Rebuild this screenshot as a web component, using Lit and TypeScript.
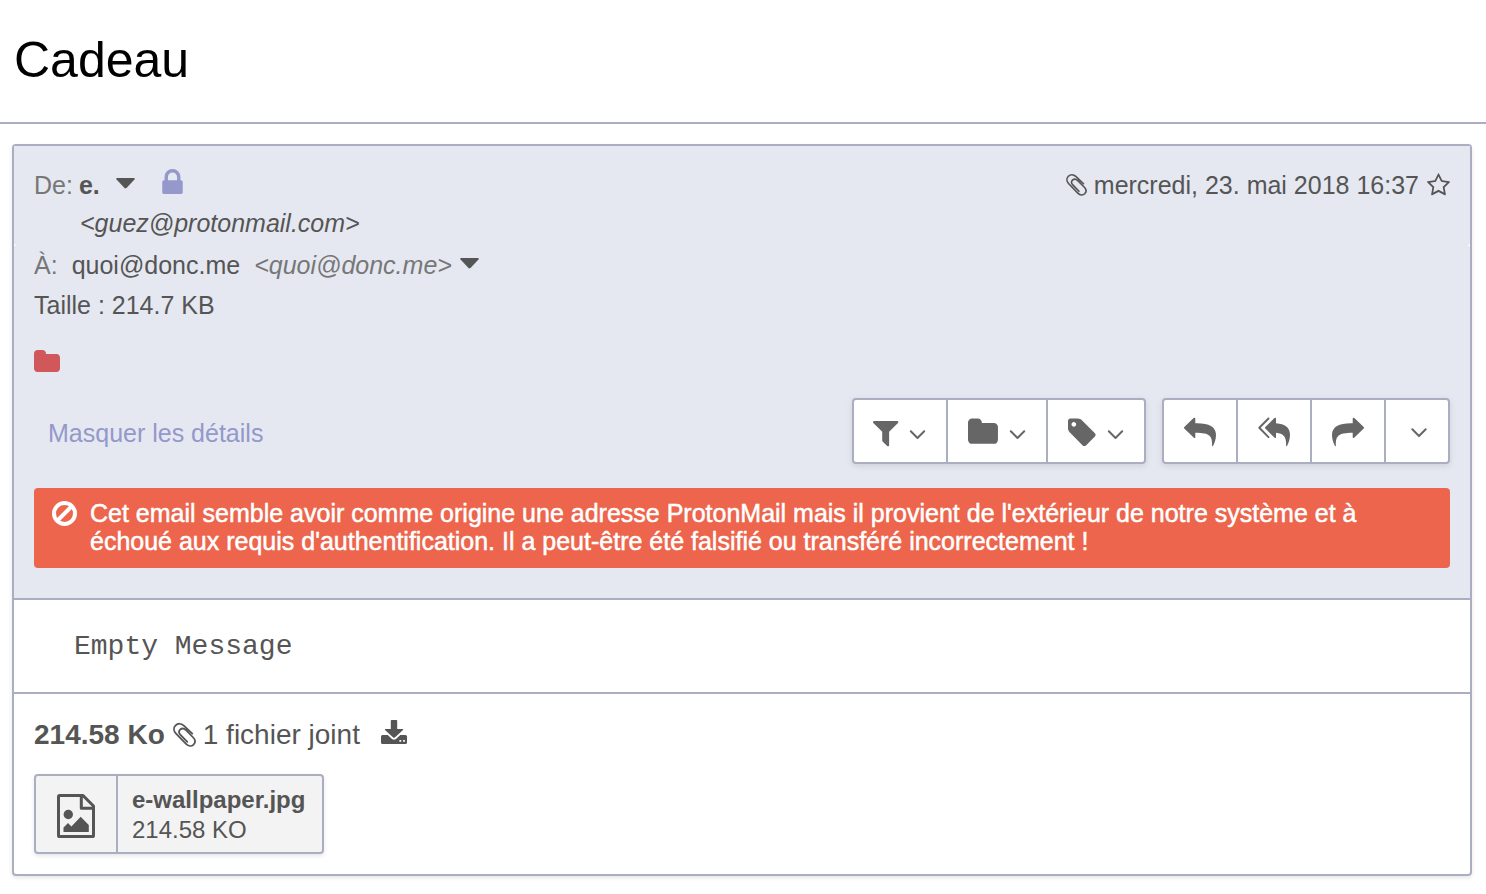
import { LitElement, html, css, svg } from "lit";
import { customElement, property } from "lit/decorators.js";

const CLIP =
  "M19.300 10.600 10.800 2.600C8.200.200 4.800.200 2.600 2.400.400 4.600.500 7.900 2.800 10.300L13 20.900C15.400 23.400 18.600 23.500 20.600 21.600 22.600 19.600 22.400 16.800 20.200 14.500L13 7.200C11.100 5.300 8.600 5.200 7.100 6.600 5.600 8.100 5.800 10.100 7.500 11.900L14.300 18.900";
const FOLDER =
  "M1728 608v704q0 92-66 158t-158 66h-1216q-92 0-158-66t-66-158v-960q0-92 66-158t158-66h320q92 0 158 66t66 158v32h672q92 0 158 66t66 158z";
const LOCK =
  "M640 768h512v-192q0-106-75-181t-181-75-181 75-75 181v192zm832 96v576q0 40-28 68t-68 28h-960q-40 0-68-28t-28-68v-576q0-40 28-68t68-28h32v-192q0-184 132-316t316-132 316 132 132 316v192h32q40 0 68 28t28 68z";
const STAR =
  "M1201 1004l306-297-422-62-189-382-189 382-422 62 306 297-73 421 378-199 377 199zm527-357q0 22-26 48l-363 354 86 500q1 7 1 20 0 50-41 50-19 0-40-12l-449-236-449 236q-22 12-40 12-21 0-31.5-14.5t-10.5-35.5q0-6 2-20l86-500-364-354q-25-27-25-48 0-37 56-46l502-73 225-455q19-41 49-41t49 41l225 455 502 73q56 9 56 46z";
const FILTER =
  "M1595 295q17 41-14 70l-493 493v742q0 42-39 59-13 5-25 5-27 0-45-19l-256-256q-19-19-19-45v-486l-493-493q-31-29-14-70 17-39 59-39h1280q42 0 59 39z";
const TAG =
  "M576 448q0-53-37.5-90.5t-90.5-37.5-90.5 37.5-37.5 90.5 37.5 90.5 90.5 37.5 90.5-37.5 37.5-90.5zm1067 576q0 53-37 90l-491 492q-39 37-91 37-53 0-90-37l-715-716q-38-37-64.5-101t-26.5-117v-416q0-52 38-90t90-38h416q53 0 117 26.5t102 64.5l715 714q37 39 37 91z";
const REPLY =
  "M.3 9.6 9.6.6Q11.3-.6 11.3 1.4V5.7C24 5.3 32 8.6 32 17.4c0 4.4-1.6 8.4-3 11q-.8.8-.9-.4C28.3 18.400 26 15.300 11.300 15.200V19.400Q11.300 21.400 9.600 20.100L.3 11.100Q-.4 10.300.3 9.600z";

type IconDef = { w: number; h: number; box: string; art: unknown };

const clipArt = svg`<path fill="none" stroke="currentColor" stroke-width="1.800" stroke-linecap="round" d=${CLIP} />`;

const ICONS: Record<string, IconDef> = {
  clip: { w: 20, h: 22, box: "0 0 22 24", art: clipArt },
  clipLarge: { w: 22, h: 24, box: "0 0 22 24", art: clipArt },
  label: { w: 26, h: 22, box: "64 128 1664 1408", art: svg`<path d=${FOLDER} />` },
  lock: { w: 21, h: 25, box: "320 128 1152 1408", art: svg`<path d=${LOCK} />` },
  star: { w: 23, h: 22, box: "64 128 1664 1491", art: svg`<path d=${STAR} />` },
  caret: {
    w: 19,
    h: 11,
    box: "0 0 19 11",
    art: svg`<path d="M1.200 0h16.600q1.700.2.700 1.500l-8 8.600q-1 .9-2 0l-8-8.600Q-.5.2 1.200 0z" />`,
  },
  filter: {
    w: 24,
    h: 30,
    box: "0 0 24 30",
    art: svg`<path transform="translate(-1 5) scale(.018) translate(-192 -256)" d=${FILTER} />`,
  },
  folder: {
    w: 30,
    h: 30,
    box: "0 0 30 30",
    art: svg`<path transform="translate(0 2.500) scale(.018) translate(-64 -128)" d=${FOLDER} />`,
  },
  tag: {
    w: 28,
    h: 30,
    box: "0 0 28 30",
    art: svg`<path transform="translate(0 2.500) scale(.0182) translate(-128 -128)" d=${TAG} />`,
  },
  chevronLow: {
    w: 16,
    h: 30,
    box: "0 0 16 30",
    art: svg`<path class="line" d="M.8 15.300 7.500 22l6.700-6.700" />`,
  },
  chevron: {
    w: 16,
    h: 30,
    box: "0 0 16 30",
    art: svg`<path class="line" d="M1.300 13.300 8 20l6.700-6.700" />`,
  },
  reply: {
    w: 32,
    h: 30,
    box: "0 0 32 30",
    art: svg`<path transform="translate(0 1.500)" d=${REPLY} />`,
  },
  replyAll: {
    w: 32,
    h: 30,
    box: "0 0 32 30",
    art: svg`<g transform="translate(0 1.500)">
      <path class="line" d="M10.500 1 1.300 10.300l9.200 9.300" />
      <path d="M7.300 9.600 16.400.6Q18-.6 18 1.400V5.700C27 6.500 32 9.500 32 17.400c0 4.400-1.600 8.400-3 11q-.8.8-.9-.4C28.300 19.500 26 16 18 15.200V19.400Q18 21.400 16.400 20.100L7.300 11.100Q6.600 10.300 7.300 9.600z" />
    </g>`,
  },
  forward: {
    w: 32,
    h: 30,
    box: "0 0 32 30",
    art: svg`<path transform="translate(32 1.500) scale(-1 1)" d=${REPLY} />`,
  },
  ban: {
    w: 25,
    h: 25,
    box: "0 0 25 25",
    art: svg`<g fill="none" stroke="currentColor" stroke-width="4">
      <circle cx="12.500" cy="12.500" r="10.500" />
      <path d="M5.500 19.500l14-14" />
    </g>`,
  },
  download: {
    w: 26,
    h: 24,
    box: "0 0 26 24",
    art: svg`<path d="M10.500 0h5q.7 0 .7.700V9h5.300q1.200.1.500 1l-8.200 7.500q-.8.600-1.600 0L4 10q-.7-.9.500-1H9.800V.7q0-.7.700-.7z" />
      <path fill-rule="evenodd" d="M1.500 15h5.200l4.300 4q2 1.600 4 0l4.300-4h5.200q1.500 0 1.500 1.500v6q0 1.500-1.500 1.500h-23Q0 24 0 22.500v-6Q0 15 1.500 15zm16.900 5v1.800h1.800V20zm3.700 0v1.800h1.800V20z" />`,
  },
  picture: {
    w: 38,
    h: 44,
    box: "0 0 38 44",
    art: svg`<path fill="none" stroke="currentColor" stroke-width="3" stroke-linejoin="round"
        d="M2.600 1.500H26L36.500 12V41.400q0 1.100-1.100 1.100H2.600q-1.100 0-1.100-1.100V2.600q0-1.100 1.100-1.100zM24.300 1.500V14.300H36.500" />
      <circle cx="11.300" cy="20.500" r="4.700" />
      <path d="M6.500 38V33.500L11 29l3.400 3.400L23.700 22.700 31.800 31V38z" />`,
  },
};

@customElement("mail-icon")
class MailIcon extends LitElement {
  @property() name = "";

  static styles = css`
    :host {
      display: inline-flex;
      flex: none;
    }
    svg {
      display: block;
      overflow: visible;
      fill: currentColor;
    }
    .line {
      fill: none;
      stroke: currentColor;
      stroke-width: 2;
      stroke-linecap: round;
      stroke-linejoin: round;
    }
  `;

  render() {
    const icon = ICONS[this.name];
    return html`<svg width=${icon.w} height=${icon.h} viewBox=${icon.box} aria-hidden="true">${icon.art}</svg>`;
  }
}

@customElement("app-root")
class AppRoot extends LitElement {
  static styles = css`
    :host {
      display: block;
      box-sizing: border-box;
      background: #fff;
      color: #555;
      font: 25px/28px "Liberation Sans", Arial, sans-serif;
    }
    *,
    *::before,
    *::after {
      box-sizing: border-box;
    }
    button {
      margin: 0;
      padding: 0;
      border: 0;
      background: none;
      color: inherit;
      font: inherit;
      cursor: pointer;
    }
    .subject {
      margin: 0;
      padding: 30px 14px 32px;
      border-bottom: 2px solid #abaec0;
      color: #000;
      font-size: 50px;
      line-height: 60px;
      font-weight: 400;
    }
    .message {
      margin: 20px 14px 18px 12px;
      border: 2px solid #abaec0;
      border-radius: 4px;
      box-shadow: 0 2px 4px rgba(0, 0, 0, 0.1);
    }
    .summary,
    .details {
      background: #e5e8f0;
      padding: 0 20px;
    }
    .summary {
      display: flex;
      justify-content: space-between;
      padding-top: 20px;
      padding-bottom: 4px;
      border-radius: 0 0 4px 4px;
      line-height: 38px;
    }
    .from,
    .date,
    .to {
      display: flex;
      align-items: center;
    }
    .muted {
      color: #777;
    }
    .name {
      margin-left: 6px;
    }
    .from button {
      display: flex;
      margin: 0 27px 4px 16px;
    }
    .lock {
      margin-bottom: 8px;
      color: #9498cb;
    }
    .address {
      padding-left: 46px;
      font-style: italic;
    }
    .date {
      height: 38px;
      gap: 8px;
    }
    .date button {
      display: flex;
    }
    .details {
      padding-bottom: 30px;
      border-bottom: 2px solid #abaec0;
    }
    .to,
    .size {
      line-height: 38px;
    }
    .to {
      gap: 14px;
    }
    .to-address {
      display: flex;
      align-items: center;
      gap: 8px;
      font-style: italic;
    }
    .to-address button {
      display: flex;
      margin-bottom: 4px;
      color: #555;
    }
    .size {
      margin-top: 2px;
    }
    .labels {
      display: flex;
      margin-top: 26px;
      color: #d0585a;
    }
    .actions {
      display: flex;
      align-items: center;
      gap: 16px;
      margin: 26px 0 24px;
    }
    .toggle {
      margin-right: auto;
      padding: 4px 14px 0;
      color: #9498cb;
    }
    .group {
      display: flex;
      border: 2px solid #abaec0;
      border-radius: 4px;
      background: #fff;
      box-shadow: 0 2px 6px rgba(0, 0, 0, 0.1);
      color: #666;
    }
    .group button {
      display: flex;
      align-items: center;
      gap: 12px;
      height: 62px;
      padding: 0 20px;
    }
    .group button + button {
      border-left: 2px solid #abaec0;
    }
    .group .more {
      padding: 0 21px 0 25px;
    }
    .warning {
      display: flex;
      align-items: flex-start;
      gap: 13px;
      padding: 11px 18px 13px;
      border-radius: 4px;
      background: #ec654c;
      color: #fff;
      -webkit-text-stroke: 0.5px #fff;
    }
    .warning mail-icon {
      padding-top: 2px;
    }
    .warning p {
      margin: 0;
    }
    .body {
      padding: 31px 60px 29px;
      border-bottom: 2px solid #abaec0;
      font: 28px/32px "Liberation Mono", "Courier New", monospace;
    }
    .files {
      padding: 20px;
    }
    .files-head {
      display: flex;
      align-items: center;
      gap: 8px;
      font-size: 28px;
      line-height: 42px;
    }
    .files-head button {
      display: flex;
      margin: 0 0 6px 13px;
    }
    .file {
      display: inline-flex;
      margin-top: 18px;
      border: 2px solid #abaec0;
      border-radius: 4px;
      background: #f3f3f3;
      box-shadow: 0 2px 4px rgba(0, 0, 0, 0.1);
      color: #555;
      font-size: 24px;
      line-height: 30px;
      text-decoration: none;
      vertical-align: top;
    }
    .file-type {
      display: flex;
      align-items: center;
      padding: 4px 21px 0;
      border-right: 2px solid #abaec0;
    }
    .file-info {
      display: flex;
      flex-direction: column;
      padding: 9px 17px 7px 14px;
    }
  `;

  render() {
    return html`
      <h1 class="subject">Cadeau</h1>
      <article class="message">
        <header>
          <div class="summary">
            <div>
              <div class="from">
                <span class="muted">De:</span>
                <b class="name">e.</b>
                <button aria-label="Options de l'expéditeur"><mail-icon name="caret"></mail-icon></button>
                <mail-icon class="lock" name="lock"></mail-icon>
              </div>
              <div class="address">&lt;guez@protonmail.com&gt;</div>
            </div>
            <div class="date">
              <mail-icon name="clip"></mail-icon>
              <time datetime="2018-05-23T16:37">mercredi, 23. mai 2018 16:37</time>
              <button aria-label="Favori"><mail-icon name="star"></mail-icon></button>
            </div>
          </div>
          <div class="details">
            <div class="to">
              <span class="muted">À:</span>
              <span>quoi@donc.me</span>
              <span class="to-address muted">
                &lt;quoi@donc.me&gt;
                <button aria-label="Options du destinataire"><mail-icon name="caret"></mail-icon></button>
              </span>
            </div>
            <div class="size">Taille : 214.7 KB</div>
            <div class="labels"><mail-icon name="label"></mail-icon></div>
            <div class="actions">
              <button class="toggle">Masquer les détails</button>
              <div class="group">
                ${[
                  ["filter", "Filtrer"],
                  ["folder", "Déplacer"],
                  ["tag", "Étiqueter"],
                ].map(
                  ([icon, label]) => html`<button aria-label=${label}>
                    <mail-icon name=${icon}></mail-icon><mail-icon name="chevronLow"></mail-icon>
                  </button>`
                )}
              </div>
              <div class="group">
                <button aria-label="Répondre"><mail-icon name="reply"></mail-icon></button>
                <button aria-label="Répondre à tous"><mail-icon name="replyAll"></mail-icon></button>
                <button aria-label="Transférer"><mail-icon name="forward"></mail-icon></button>
                <button class="more" aria-label="Plus"><mail-icon name="chevron"></mail-icon></button>
              </div>
            </div>
            <div class="warning" role="alert">
              <mail-icon name="ban"></mail-icon>
              <p>
                Cet email semble avoir comme origine une adresse ProtonMail mais il provient de l'extérieur de notre
                système et à échoué aux requis d'authentification. Il a peut-être été falsifié ou transféré
                incorrectement !
              </p>
            </div>
          </div>
        </header>
        <div class="body">Empty Message</div>
        <footer class="files">
          <div class="files-head">
            <b>214.58 Ko</b>
            <mail-icon name="clipLarge"></mail-icon>
            <span>1 fichier joint</span>
            <button aria-label="Tout télécharger"><mail-icon name="download"></mail-icon></button>
          </div>
          <a class="file" href="#">
            <span class="file-type"><mail-icon name="picture"></mail-icon></span>
            <span class="file-info"><b>e-wallpaper.jpg</b><span>214.58 KO</span></span>
          </a>
        </footer>
      </article>
    `;
  }
}
